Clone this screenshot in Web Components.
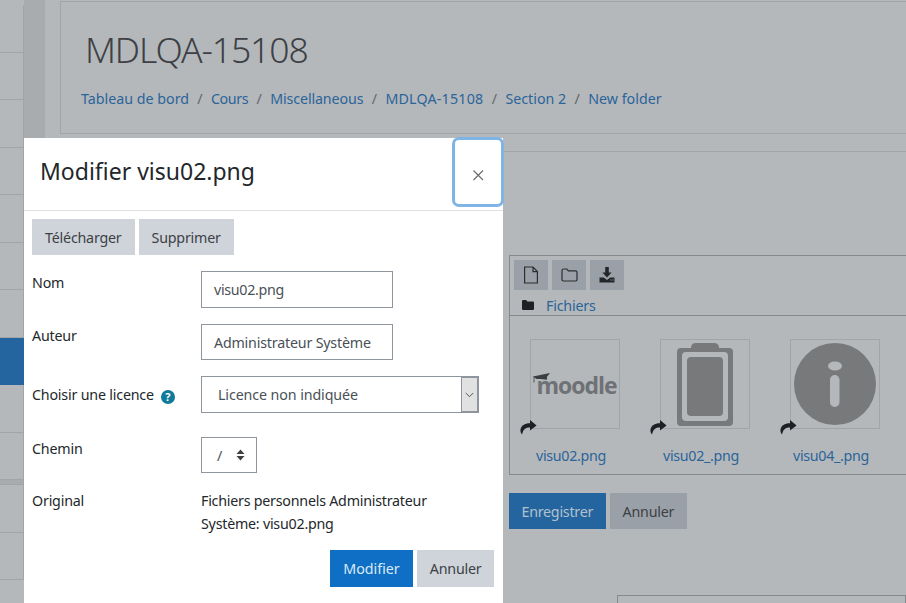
<!DOCTYPE html>
<html lang="fr"><head><meta charset="utf-8"><title>MDLQA-15108</title>
<style>
html,body{margin:0;padding:0;height:603px;overflow:hidden;background:#b5b8bb}
body{font:14.25px/23px "Noto Sans",sans-serif;color:#3d4145}
</style></head><body>
<moodle-page>
  <side-nav slot="side"></side-nav>
  <page-header slot="main" title-text="MDLQA-15108"></page-header>
  <file-panel slot="main"></file-panel>
</moodle-page>
<edit-dialog></edit-dialog>
<script>
function def(name, html, init){
  customElements.define(name, class extends HTMLElement{
    constructor(){super();this.attachShadow({mode:'open'}).innerHTML=html;}
    connectedCallback(){ if(init) init.call(this,this.shadowRoot); }
  });
}
def('moodle-page',`<style>
:host{display:grid;grid-template-columns:24px 21px 15px 846px;width:906px;height:603px;overflow:hidden}
.gut{background:#a9acaf}
.main{display:flex;flex-direction:column;padding-top:1px;min-width:0}
</style><slot name="side"></slot><div class="gut"></div><div></div><div class="main"><slot name="main"></slot></div>`);

def('side-nav',`<style>
:host{display:block;padding-top:5px}
.i{height:46.5px;border-bottom:1px solid #a2a5a8;border-right:1px solid #a2a5a8}
.i:first-child{border-top:1px solid #a2a5a8;height:46px}
.a{background:#24659f;border-color:#24659f}
.s{height:4px;background:#a9acaf;border-bottom:1px solid #a2a5a8;border-right:1px solid #a2a5a8}
</style><div class="i"></div><div class="i"></div><div class="i"></div><div class="i"></div><div class="i"></div><div class="i"></div><div class="i"></div><div class="i a"></div><div class="i"></div><div class="i"></div><div class="s"></div><div class="i"></div><div class="i"></div>`);

def('page-header',`<style>
:host{display:block;height:133px;box-sizing:border-box;border:1px solid #a2a5a8;border-right:0;padding:22px 25px 0 20px;flex:none}
h1{margin:0 0 0 4px;font:300 35.5px/50px "Noto Sans",sans-serif;color:#3d4145;letter-spacing:-1.1px}
nav{margin-top:13px;display:flex;color:#2a6499;font-size:14.25px;line-height:23px}
i{font-style:normal;color:#62666a;width:22px;text-align:center}
</style><h1></h1><nav><span>Tableau de bord</span><i>/</i><span style="letter-spacing:-.4px">Cours</span><i>/</i><span style="letter-spacing:-.12px">Miscellaneous</span><i>/</i><span style="letter-spacing:.2px">MDLQA-15108</span><i>/</i><span>Section 2</span><i>/</i><span>New folder</span></nav>`,
function(r){r.querySelector('h1').textContent=this.getAttribute('title-text');});

def('ui-btn',`<style>
:host{display:inline-flex;align-items:center;justify-content:center;height:36px;padding:0 13px;box-sizing:border-box;background:var(--b,#ced4da);color:var(--c,#3d4145);font-size:14.25px;white-space:nowrap;letter-spacing:var(--ls,-.2px)}
</style><slot></slot>`);

def('file-tile',`<style>
:host{display:flex;flex-direction:column;align-items:center;width:130px;flex:none}
.t{position:relative;width:88px;height:88px;border:1px solid #a2a5a8;margin-left:8px;display:flex;align-items:center;justify-content:center}
.ar{position:absolute;left:-11px;bottom:-7px;width:17px;height:16px}
.n{margin-top:15px;color:#2a6499;font-size:14.25px;letter-spacing:-.3px}
</style><div class="t"><slot></slot><svg class="ar" viewBox="0 0 17 16"><path d="M10 1l6.6 5.4L10 11.6V8.4C6 8.3 3.4 9.5 2 15.6.6 14 .3 12.4.5 10.6 1 6.6 5 4.2 10 4.3z" fill="#1d2125"/></svg></div><div class="n"></div>`,
function(r){r.querySelector('.n').textContent=this.getAttribute('name');});

def('file-panel',`<style>
:host{display:block;margin-top:17px;border-top:1px solid #a2a5a8;padding:103px 0 0 449px;flex:none}
.fm{border:1px solid #85898e;border-right:0;height:220px;box-sizing:border-box}
.tb{display:flex;gap:4px;padding:4px 0 0 4px}
.tb b{display:flex;width:34px;height:30px;background:#9aa0a7;align-items:center;justify-content:center}
.path{height:26px;display:flex;align-items:center;padding:5px 0 0 12px;color:#2a6499;font-size:14.25px;border-bottom:1px solid #85898e;box-sizing:border-box;letter-spacing:-.2px}
.path svg{margin-right:12px}
.files{display:flex;margin:23px 0 0 -4px}
.actions{display:flex;gap:4px;margin-top:18px}
.next{margin:66px 0 0 108px;height:40px;border:1px solid #85898e}
.logo{position:relative;font:700 23px/30px "Open Sans",sans-serif;color:#6e7176;letter-spacing:-1px;display:block;margin:2px 0 0 3px}
.logo svg{position:absolute;left:-3px;top:3px}
</style>
<div class="fm"><div class="tb">
<b><svg width="16" height="18" viewBox="0 0 16 18" fill="none" stroke="#2a2e33" stroke-width="1.2"><path d="M1.6 1h8.4l4.4 4.6V17H1.6zM10 1v4.6h4.4"/></svg></b>
<b><svg width="17" height="14" viewBox="0 0 17 14" fill="none" stroke="#2a2e33" stroke-width="1.2"><path d="M1 2.6Q1 1 2.6 1h3.2l1.6 1.8h7.2q1.4 0 1.4 1.4v7.4q0 1.4-1.4 1.4H2.4Q1 13 1 11.6z"/></svg></b>
<b><svg width="16" height="16" viewBox="0 0 16 16" fill="#23272b"><path d="M6.2 0h3.6v5.4h2.8L8 10.4 3.4 5.4h2.8z"/><path d="M.5 10.4h4.3L8 13l3.2-2.6h4.3V15.6H.5z"/><path d="M11.5 13h1M13.5 13h1" stroke="#9aa0a7" stroke-width="1"/></svg></b>
</div>
<div class="path"><svg width="12" height="10" viewBox="0 0 12 10" fill="#1d2125"><path d="M0 1.2Q0 0 1.2 0h3l1.2 1.4h5.4Q12 1.4 12 2.6v6.2Q12 10 10.800 10H1.2Q0 10 0 8.800z"/></svg>Fichiers</div>
<div class="files">
<file-tile name="visu02.png"><span class="logo">moodle<svg width="18" height="11" viewBox="0 0 18 11"><path d="M0 3.500L17 0l-3 3.800v3L7 6 3.500 6z" fill="#3a3d41"/><path d="M1 3.500v6" stroke="#3a3d41" stroke-width=".8"/></svg></span></file-tile>
<file-tile name="visu02_.png"><svg width="56" height="83" viewBox="0 0 56 83"><path d="M14 5Q14 0 19 0H37Q42 0 42 5H52Q56 5 56 9V79Q56 83 52 83H4Q0 83 0 79V9Q0 5 4 5z" fill="#77797b"/><rect x="5" y="9" width="46" height="69" rx="4" fill="#b5b8bb"/><rect x="10" y="14" width="36" height="59" rx="4" fill="#77797b"/></svg></file-tile>
<file-tile name="visu04_.png"><svg width="82" height="82" viewBox="0 0 82 82"><circle cx="41" cy="41" r="41" fill="#77797b"/><ellipse cx="41" cy="23" rx="7" ry="4.500" fill="#b5b8bb"/><rect x="36" y="32" width="9.500" height="32" rx="4.700" fill="#b5b8bb"/></svg></file-tile>
</div></div>
<div class="actions"><ui-btn style="--b:#24659f;--c:#b4c1cd;--ls:-.25px;padding:0 12.500px">Enregistrer</ui-btn><ui-btn style="--b:#9aa0a7">Annuler</ui-btn></div>
<div class="next"></div>`);

def('form-row',`<style>
:host{display:grid;grid-template-columns:169px 1fr;margin-bottom:16px}
.l{padding-top:var(--lp,0);display:flex;gap:6px;align-items:flex-start}
</style><div class="l"><slot name="label"></slot></div><div><slot></slot></div>`);

def('edit-dialog',`<style>
:host{position:absolute;left:24px;top:138px;width:478.5px;height:465px;background:#fff;color:#23272b;display:block;font-size:14.25px;letter-spacing:-.19px}
header{height:72px;border-bottom:1px solid #dee2e6;display:flex;justify-content:space-between;padding-left:16px;box-sizing:content-box}
h2{margin:0;font:400 23px/34px "Noto Sans",sans-serif;padding-top:16px;color:#23272b;letter-spacing:0}
.x{width:46px;height:64px;margin:2px 1.500px 0 0;border-radius:4px;box-shadow:0 0 0 3px #7fb5e6;display:flex;align-items:center;justify-content:center}
.body{padding:8px}
.tools{display:flex;gap:4px;margin-bottom:16px}
.f{display:block;border:1px solid #8f959e;box-sizing:border-box;color:#495057;height:37px;display:flex;align-items:center;padding-left:12px}
.h{width:14px;height:14px;border-radius:50%;background:#0f7a99;color:#fff;font:700 11px/14px "Noto Sans",sans-serif;text-align:center;margin:7px 0 0 1px;flex:none}
.sel{width:278px;padding-left:16px;position:relative;letter-spacing:-.1px}
.ar{position:absolute;right:0;top:0;bottom:0;width:17px;background:#e1e1e1;border:1px solid #8f959e;box-sizing:border-box;display:flex;align-items:center;justify-content:center}
.p{width:56px;height:36px;padding-left:15px;gap:14px}
.foot{display:flex;justify-content:flex-end;gap:4px;margin:15px 0 0;padding-right:.500px}
.txt{width:250px;letter-spacing:-.23px}
</style>
<header><h2>Modifier visu02.png</h2><div class="x"><svg width="12" height="12" viewBox="0 0 12 12" stroke="#6a6e73" stroke-width="1.200" fill="none" style="margin-top:5px"><path d="M1.500 1.500l9.500 9.500M11 1.500l-9.500 9.500"/></svg></div></header>
<div class="body">
<div class="tools"><ui-btn>Télécharger</ui-btn><ui-btn>Supprimer</ui-btn></div>
<form-row><span slot="label">Nom</span><div class="f" style="width:192px;letter-spacing:-.3px">visu02.png</div></form-row>
<form-row><span slot="label">Auteur</span><div class="f" style="width:192px;height:36px">Administrateur Système</div></form-row>
<form-row style="--lp:7px;margin-bottom:24px"><span slot="label">Choisir une licence</span><span class="h" slot="label">?</span><div class="f sel">Licence non indiquée<span class="ar"><svg width="9" height="6" viewBox="0 0 9 6" fill="none" stroke="#555" stroke-width="1"><path d="M.8 1l3.700 3.700L8.200 1"/></svg></span></div></form-row>
<form-row><span slot="label">Chemin</span><div class="f p">/<svg width="9" height="12" viewBox="0 0 9 12" fill="#3d4145"><path d="M4.500.5L8.500 5H.5zM4.500 11.500L.5 7h8z"/></svg></div></form-row>
<form-row style="margin-bottom:0"><span slot="label">Original</span><div class="txt">Fichiers personnels Administrateur Système: visu02.png</div></form-row>
<div class="foot"><ui-btn style="--b:#0f6fc5;--c:#dbe9f6;--ls:0;height:37px;padding:0 13.500px">Modifier</ui-btn><ui-btn style="height:37px;padding:0 12.500px">Annuler</ui-btn></div>
</div>`);
</script>
</body></html>
